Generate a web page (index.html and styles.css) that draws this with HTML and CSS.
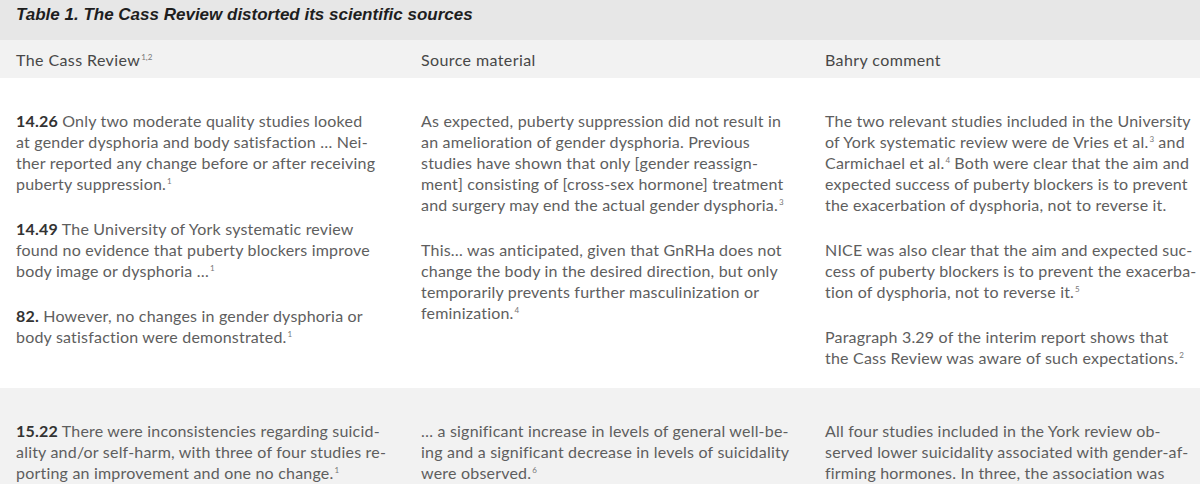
FILE: index.html
```html
<!DOCTYPE html>
<html lang="en">
<head>
<meta charset="utf-8">
<title>Table 1</title>
<link rel="stylesheet" href="styles.css">
</head>
<body>
<div class="table">
  <div class="caption">Table 1. The Cass Review distorted its scientific sources</div>
  <div class="row head">
    <div class="cell">The Cass Review<sup>1,2</sup></div>
    <div class="cell">Source material</div>
    <div class="cell">Bahry comment</div>
  </div>
  <div class="row">
    <div class="cell">
      <p><b>14.26</b> Only two moderate quality studies looked<br>at gender dysphoria and body satisfaction … Nei-<br>ther reported any change before or after receiving<br>puberty suppression.<sup>1</sup></p>
      <p><b>14.49</b> The University of York systematic review<br>found no evidence that puberty blockers improve<br>body image or dysphoria …<sup>1</sup></p>
      <p><b>82.</b> However, no changes in gender dysphoria or<br>body satisfaction were demonstrated.<sup>1</sup></p>
    </div>
    <div class="cell">
      <p>As expected, puberty suppression did not result in<br>an amelioration of gender dysphoria. Previous<br>studies have shown that only [gender reassign-<br>ment] consisting of [cross-sex hormone] treatment<br>and surgery may end the actual gender dysphoria.<sup>3</sup></p>
      <p>This… was anticipated, given that GnRHa does not<br>change the body in the desired direction, but only<br>temporarily prevents further masculinization or<br>feminization.<sup>4</sup></p>
    </div>
    <div class="cell">
      <p>The two relevant studies included in the University<br>of York systematic review were de Vries et al.<sup>3</sup> and<br>Carmichael et al.<sup>4</sup> Both were clear that the aim and<br>expected success of puberty blockers is to prevent<br>the exacerbation of dysphoria, not to reverse it.</p>
      <p>NICE was also clear that the aim and expected suc-<br>cess of puberty blockers is to prevent the exacerba-<br>tion of dysphoria, not to reverse it.<sup>5</sup></p>
      <p>Paragraph 3.29 of the interim report shows that<br>the Cass Review was aware of such expectations.<sup>2</sup></p>
    </div>
  </div>
  <div class="row alt">
    <div class="cell">
      <p><b>15.22</b> There were inconsistencies regarding suicid-<br>ality and/or self-harm, with three of four studies re-<br>porting an improvement and one no change.<sup>1</sup></p>
    </div>
    <div class="cell">
      <p>… a significant increase in levels of general well-be-<br>ing and a significant decrease in levels of suicidality<br>were observed.<sup>6</sup></p>
    </div>
    <div class="cell">
      <p>All four studies included in the York review ob-<br>served lower suicidality associated with gender-af-<br>firming hormones. In three, the association was<br>statistically significant.<sup>7</sup> In the fourth, the association was</p>
    </div>
  </div>
</div>
</body>
</html>
```
FILE: styles.css
```css
html, body {
  margin: 0;
  padding: 0;
  overflow: hidden;
  background: #ffffff;
}

.table {
  width: 1200px;
  font-family: "Lato", "Open Sans", sans-serif;
  color: #5e5e5e;
}

.caption {
  background: #e7e7e7;
  height: 40px;
  box-sizing: border-box;
  padding: 4px 16px 0;
  font-family: "Liberation Sans", Arial, sans-serif;
  font-weight: bold;
  font-style: italic;
  font-size: 17px;
  line-height: 21px;
  color: #1e1e1e;
}

.row {
  display: grid;
  grid-template-columns: 405px 404px 1fr;
}

.cell {
  padding: 0 16px;
  white-space: nowrap;
  overflow: hidden;
  font-size: 16px;
  letter-spacing: 0.2px;
}

.head {
  background: #f2f2f2;
  height: 38px;
  align-items: center;
  color: #474747;
}

.head .cell {
  letter-spacing: 0.4px;
}

.row:not(.head) .cell {
  padding-top: 32px;
  padding-bottom: 20px;
  line-height: 21px;
}

.alt {
  background: #f2f2f2;
}

.alt .cell {
  padding-top: 38px;
  line-height: 20px;
}

p {
  margin: 0 0 24px;
}

p:last-child {
  margin-bottom: 0;
}

b {
  font-weight: 700;
  color: #333333;
}

sup {
  font-size: 8px;
  line-height: 0;
  vertical-align: 6px;
  margin-left: 1px;
  letter-spacing: 0;
  color: #777777;
}
```
